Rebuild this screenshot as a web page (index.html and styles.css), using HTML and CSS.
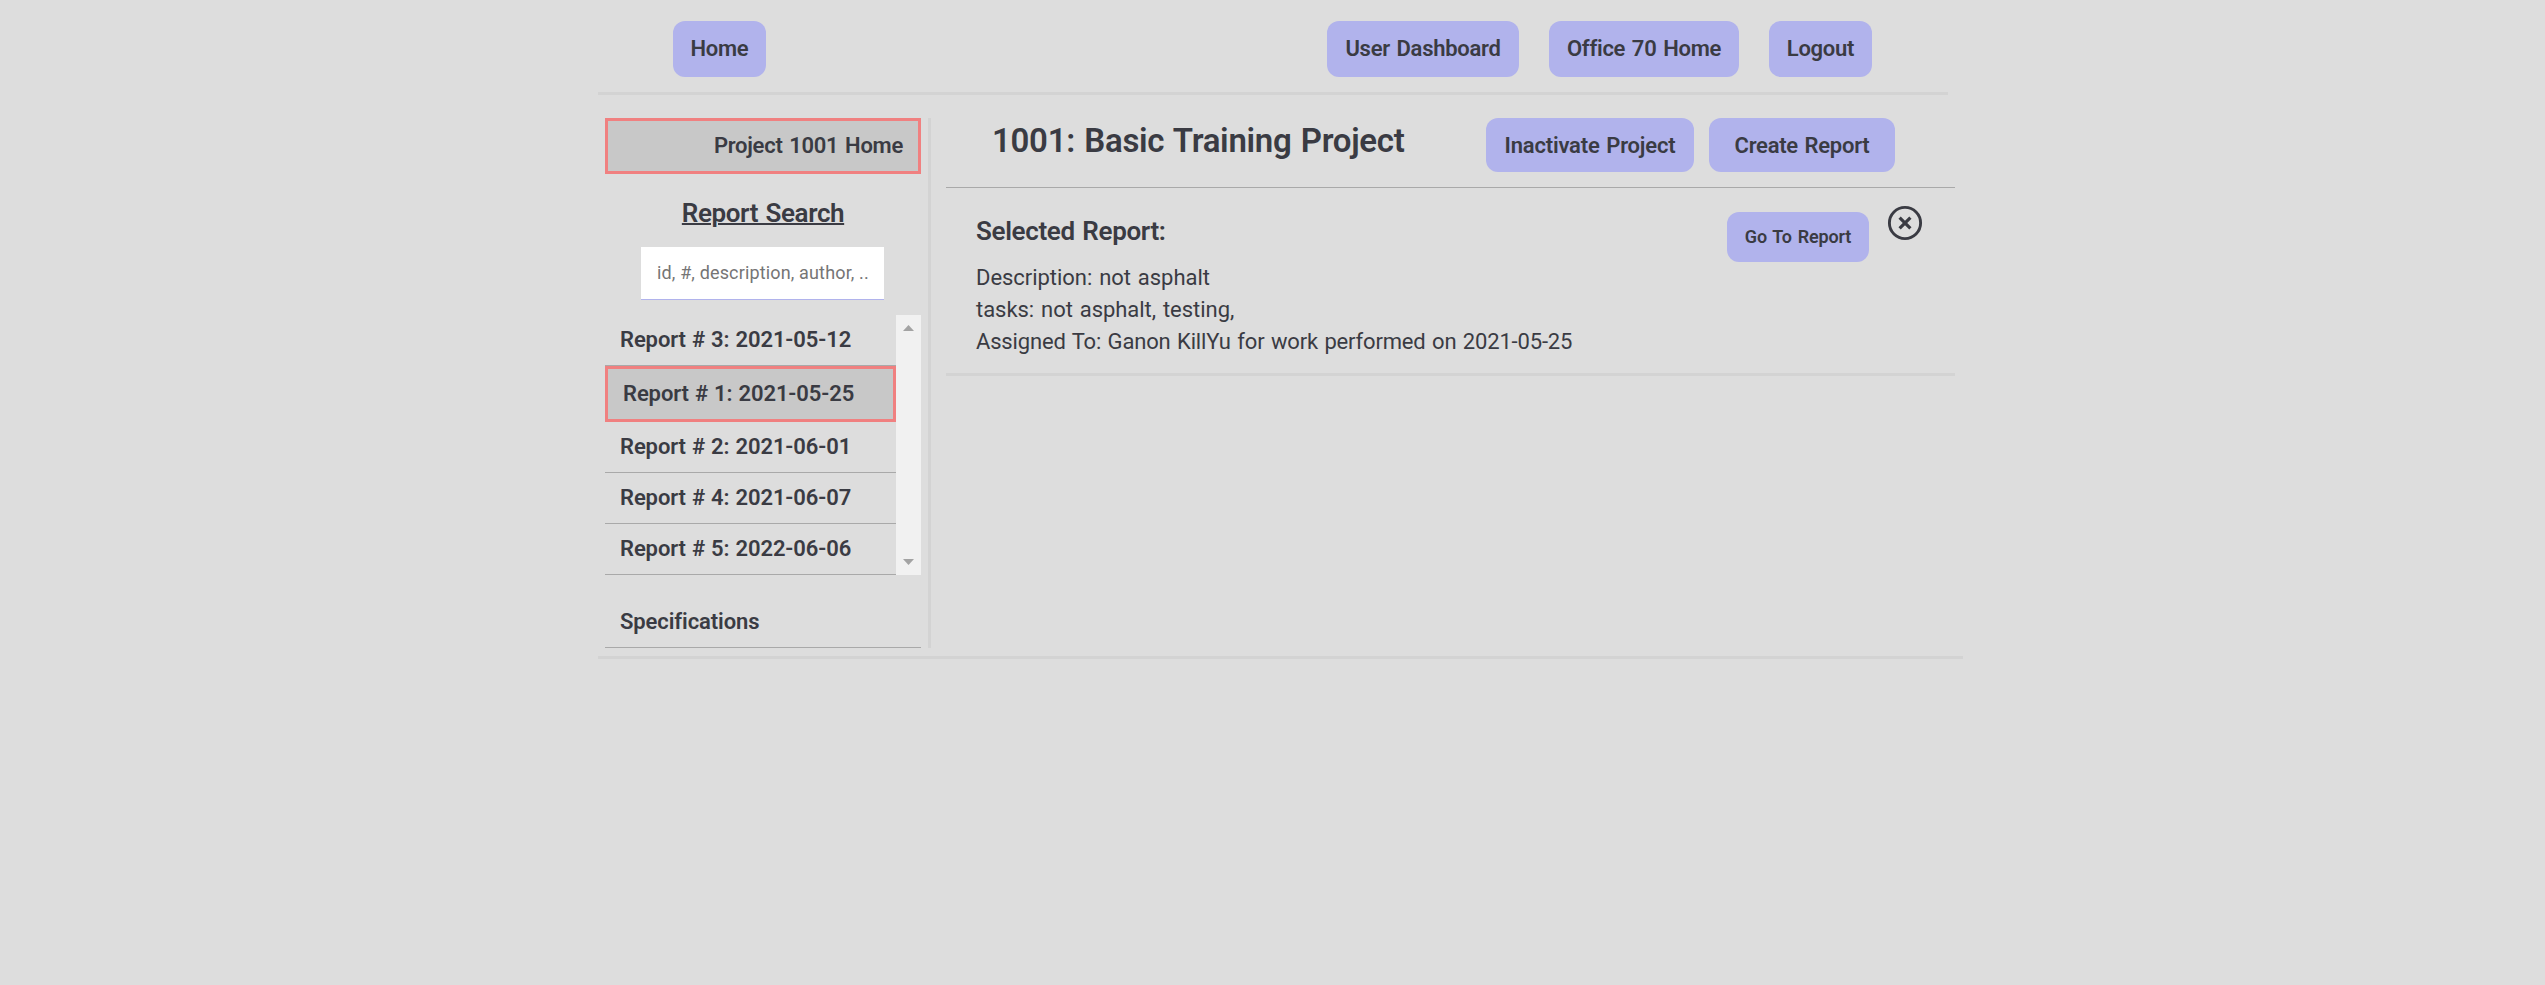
FILE: index.html
```html
<!DOCTYPE html>
<html lang="en">
<head>
<meta charset="utf-8">
<title>1001: Basic Training Project</title>
<link rel="stylesheet" href="styles.css">
</head>
<body>
<div class="page">
  <header class="topbar">
    <button class="btn btn-home">Home</button>
    <nav class="topnav">
      <button class="btn btn-user">User Dashboard</button>
      <button class="btn btn-office">Office 70 Home</button>
      <button class="btn btn-logout">Logout</button>
    </nav>
  </header>
  <div class="content">
    <aside class="sidebar">
      <div class="project-home">Project 1001 Home</div>
      <h2 class="search-title">Report Search</h2>
      <input class="search" type="text" placeholder="id, #, description, author, ..">
      <div class="list">
        <ul class="reports">
          <li class="row">Report # 3: 2021-05-12</li>
          <li class="row selected">Report # 1: 2021-05-25</li>
          <li class="row">Report # 2: 2021-06-01</li>
          <li class="row">Report # 4: 2021-06-07</li>
          <li class="row">Report # 5: 2022-06-06</li>
        </ul>
        <div class="scrollbar">
          <svg width="11" height="6" viewBox="0 0 11 6"><path d="M0 6 5.5 0 11 6Z" fill="#a3a3a3"/></svg>
          <svg width="11" height="6" viewBox="0 0 11 6"><path d="M0 0 5.5 6 11 0Z" fill="#a3a3a3"/></svg>
        </div>
      </div>
      <div class="row specs">Specifications</div>
    </aside>
    <main class="main">
      <div class="project-head">
        <h1 class="title">1001: Basic Training Project</h1>
        <button class="btn btn-inactivate">Inactivate Project</button>
        <button class="btn btn-create">Create Report</button>
      </div>
      <section class="report">
        <div class="report-text">
          <h3 class="report-title">Selected Report:</h3>
          <p class="line">Description: not asphalt</p>
          <p class="line">tasks: not asphalt, testing,</p>
          <p class="line assigned">Assigned To: Ganon KillYu for work performed on 2021-05-25</p>
        </div>
        <button class="btn btn-go">Go To Report</button>
        <svg class="close" width="36" height="36" viewBox="0 0 36 36" fill="none" stroke="#3a3b43"><circle cx="18" cy="18" r="15.6" stroke-width="2.9"/><path d="M12.6 12.6 23.4 23.4M23.4 12.6 12.6 23.4" stroke-width="3.2"/></svg>
      </section>
    </main>
  </div>
</div>
</body>
</html>
```
FILE: styles.css
```css
* { box-sizing: border-box; margin: 0; padding: 0; }
body {
  background: #ddd;
  color: #3a3b43;
  font-family: Roboto, "Liberation Sans", sans-serif;
  font-size: 22px;
  letter-spacing: -0.27px;
  word-spacing: 1.5px;
}
.page { width: 1365px; margin-left: 598px; border-bottom: 3px solid #d3d3d3; padding-bottom: 8px; }
.topbar {
  display: flex;
  justify-content: space-between;
  width: 1350px;
  height: 95px;
  padding: 21px 76px 0 75px;
  border-bottom: 3px solid #d3d3d3;
}
.topnav { display: flex; gap: 30px; }
.btn {
  height: 56px;
  padding-bottom: 2px;
  border: 0;
  border-radius: 12px;
  background: #b1b3ec;
  color: #3a3b43;
  font: 600 22px Roboto, "Liberation Sans", sans-serif;
  letter-spacing: -0.27px;
  word-spacing: 1.5px;
  white-space: nowrap;
}
.btn-home { width: 93px; }
.btn-user { width: 192px; }
.btn-office { width: 190px; }
.btn-logout { width: 103px; }
.content { display: flex; padding: 23px 0 0 7px; }
.sidebar {
  display: flex;
  flex-direction: column;
  width: 326px;
  height: 530px;
  padding-right: 7px;
  border-right: 3px solid #d3d3d3;
  font-weight: 600;
}
.project-home {
  height: 56px;
  border: 3px solid #f08080;
  background: #c8c8c8;
  padding-right: 15px;
  line-height: 49px;
  text-align: right;
}
.search-title {
  margin-top: 20px;
  height: 53px;
  line-height: 38px;
  font-size: 26px;
  font-weight: 600;
  letter-spacing: -0.4px;
  text-align: center;
  text-decoration: underline;
  text-decoration-thickness: 2px;
}
.search {
  width: 243px;
  height: 53px;
  margin-left: 36px;
  padding: 0 13px 1px 16px;
  border: 0;
  border-bottom: 1px solid #b1b3ec;
  background: #fff;
  font: 400 18px Roboto, "Liberation Sans", sans-serif;
  letter-spacing: 0.15px;
}
.search::placeholder { color: #757575; opacity: 1; }
.list { display: flex; height: 260px; margin-top: 15px; }
.reports { width: 291px; list-style: none; letter-spacing: -0.1px; word-spacing: 0.7px; }
.row { height: 51px; padding-left: 15px; line-height: 49px; border-bottom: 1px solid #a9a9a9; }
.row.selected { height: 56px; border: 3px solid #f08080; background: #c8c8c8; }
.scrollbar {
  display: flex;
  flex-direction: column;
  justify-content: space-between;
  align-items: center;
  width: 25px;
  padding: 10px 0;
  background: #f1f1f1;
}
.specs { margin-top: 22px; letter-spacing: -0.1px; }
.main { width: 1009px; margin-left: 15px; }
.project-head {
  display: flex;
  height: 70px;
  padding-left: 46px;
  border-bottom: 1px solid #a9a9a9;
}
.title { width: 494px; font-size: 33px; font-weight: 600; line-height: 45px; white-space: nowrap; letter-spacing: -0.3px; }
.btn-inactivate { width: 208px; height: 54px; padding-bottom: 0; letter-spacing: -0.2px; }
.btn-create { width: 186px; height: 54px; margin-left: 15px; padding-bottom: 0; }
.report { display: flex; height: 188px; padding-left: 30px; border-bottom: 3px solid #d3d3d3; }
.report-text { width: 751px; padding-top: 22px; }
.report-title { height: 52px; font-size: 26px; font-weight: 600; line-height: 42px; letter-spacing: -0.35px; }
.line { line-height: 32px; letter-spacing: -0.04px; word-spacing: 1.5px; }
.line.assigned { letter-spacing: -0.17px; word-spacing: 1.2px; }
.btn-go { width: 142px; height: 50px; margin-top: 24px; font-size: 18px; letter-spacing: -0.15px; }
.close { margin: 17px 0 0 18px; }
```
